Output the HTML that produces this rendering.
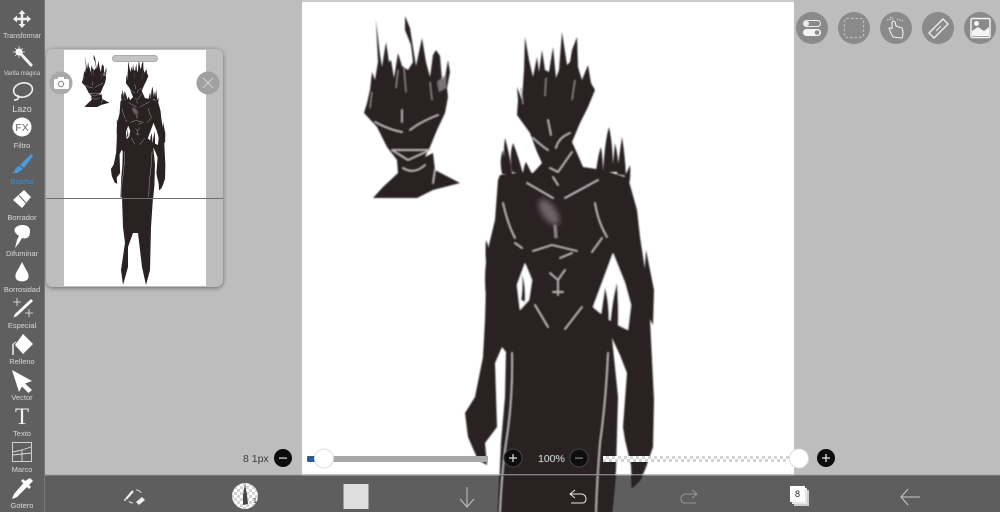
<!DOCTYPE html>
<html><head><meta charset="utf-8"><style>
html,body{margin:0;padding:0;background:#bdbdbd;width:1000px;height:512px;overflow:hidden}
svg{display:block}
text{font-family:"Liberation Sans",sans-serif}
.l{fill:#d8d8d8;font-size:7px;text-anchor:middle}
</style></head><body>
<svg width="1000" height="512" viewBox="0 0 1000 512" xmlns="http://www.w3.org/2000/svg">
<defs>
<filter id="b" x="-5%" y="-5%" width="110%" height="110%"><feGaussianBlur stdDeviation="0.9"/></filter>
<filter id="bb" x="-30%" y="-30%" width="160%" height="160%"><feGaussianBlur stdDeviation="3"/></filter>
<filter id="t" x="-5%" y="-5%" width="110%" height="110%"><feGaussianBlur stdDeviation="0.3"/></filter>
<filter id="sh" x="-10%" y="-10%" width="120%" height="120%"><feDropShadow dx="0" dy="1" stdDeviation="2.5" flood-color="#000" flood-opacity=".45"/></filter>
<pattern id="ck" width="6" height="6" patternUnits="userSpaceOnUse"><rect width="6" height="6" fill="#fff"/><rect width="3" height="3" fill="#d4d4d4"/><rect x="3" y="3" width="3" height="3" fill="#d4d4d4"/></pattern>
<clipPath id="mc"><rect x="64" y="50" width="142" height="236"/></clipPath>
<clipPath id="bc"><rect x="302" y="476" width="492" height="36"/></clipPath>
<g id="fig">
<g filter="url(#b)">
<g fill="#2a2023">
<!-- bust head -->
<path d="M364,113L367,103 370,90 372,72 375,80 378,62 376,20 380,55 382,67 386,42 389,62 391,60 394,78 398,53 402,66 408,70 413,62 411,45 405,30 405,16 410,28 413,47 416,66 422,38 426,62 430,77 433,55 436,50 440,56 442,80 445,78 448,60 450,72 447,88 448,97 445,113 437,130 430,147 425,157 433,153 435,170 460,183 433,190 417,198 373,198 383,187 398,173 397,160 387,147 377,127Z"/>
<!-- main figure -->
<path d="M498,180L500,175 523,172 533,173 542,163 537,152 530,133 517,115 518,100 517,87 522,100 524,70 525,37 529,60 533,77 537,57 539,72 542,50 545,70 549,72 553,47 556,78 559,70 562,32 567,65 570,62 572,50 577,37 578,67 582,80 588,65 591,83 595,90 588,107 580,123 572,142 577,153 583,167 603,170 628,178 637,210 640,237 645,270 650,320 654,400 653,447 645,470 640,480 632,488 631,465 625,440 623,427 627,373 620,355 612,338 618,397 616,470 612,512 498,512 501,443 505,397 506,352 502,347 495,363 497,427 485,443 487,465 478,460 468,437 465,413 475,397 483,357 485,320 486,285 489,245 495,220Z"/>
<path d="M502,174Q499,160 503,150 505,165 507,174ZM505,174Q503,150 505,138 510,155 512,174ZM512,172Q509,155 513,143 518,155 523,174ZM523,174Q524,165 526,162 529,168 533,176Z"/>
<path d="M596,172Q598,155 601,147 603,160 603,172ZM603,172Q605,140 609,127 613,145 613,172ZM612,172Q614,155 615,143 618,155 619,172ZM617,174Q620,150 622,137 625,155 626,176ZM624,178Q628,170 630,165 631,175 629,185Z"/>
<path d="M486,262Q485,250 486,240 491,252 491,262L493,300 486,296Q484,280 486,262ZM646,250L650,270 654,290 653,325 646,312 644,280Z"/>
</g>
<path fill="#fff" d="M525,263L532,280 529,300 520,310 517,285ZM613,253L625,283 631,305 628,330 618,325 606,318 593,307 603,280Z"/>
<path fill="#2a2023" d="M600,322Q603,300 605,288 609,300 609,322ZM610,326Q612,300 617,283 619,305 618,330Z"/>
<path fill="#2a2023" d="M521,300Q523,285 522,275 526,285 525,302Z"/>
<ellipse cx="549" cy="212" rx="7" ry="15" fill="#a59ea0" opacity=".55" filter="url(#bb)" transform="rotate(-35 549 212)"/>
<path d="M555,225L556,238" stroke="#8a8284" stroke-width="3" fill="none"/>
<g fill="none" stroke="#c4bdbf" stroke-width="1.4" stroke-linecap="round" stroke-linejoin="round">
<path d="M527,183L553,198M598,180L565,198M503,203Q508,225 515,238M595,203Q598,222 607,237M515,243L522,248M533,251L552,245 577,251M602,238L592,252M560,258L572,253"/>
<path d="M533,138Q543,147 548,150M570,133Q558,138 556,148M548,120L551,135M550,168L558,172 572,152M553,177L558,185"/>
<path d="M550,273L558,280 558,295M565,270L558,280M553,292L563,292M535,305L548,327M582,307L565,329"/>
<path d="M512,353Q513,400 506,443 502,470 500,512M608,353Q606,400 600,443 597,480 596,512"/>
<path d="M375,122Q390,130 402,132M438,115Q420,122 410,130M392,150L430,150 408,160ZM402,110L402,122M403,168Q414,175 425,165M435,170L433,183"/>
</g>
<g fill="none" stroke="#9a9294" stroke-width="1">
<path d="M372,92L370,108M398,70L396,88M404,68L406,92M430,82L432,100M521,88L523,104M575,80L572,100M546,78L545,96"/>
</g>
<path d="M437,82L446,74 446,88 439,92Z" fill="#8e8688" opacity=".8"/>
</g>
</g>
</defs>

<rect width="1000" height="512" fill="#bdbdbd"/>
<!-- canvas -->
<rect x="302" y="2" width="492" height="474" fill="#fff"/>
<rect x="302" y="0" width="492" height="2" fill="#c9c9c9"/>
<use href="#fig"/>

<!-- minimap -->
<g filter="url(#sh)"><rect x="46" y="49" width="177" height="238" rx="7" fill="#bdbdbd"/></g>
<rect x="64" y="50" width="142" height="236" fill="#fff"/>
<g clip-path="url(#mc)">
<g transform="translate(-23,50) scale(.288)"><use href="#fig"/></g>
<path fill="#2a2023" filter="url(#t)" d="M122,197L123,227 125,243 121,270 123,285 128,267 128,247 133,233 138,233 142,267 146,285 150,270 151,227 153,197Z"/>
</g>
<rect x="46" y="198" width="177" height="1" fill="#6e6e6e"/>
<rect x="112.500" y="55.500" width="45" height="6" rx="3" fill="#c4c4c4" stroke="#aaa"/>
<circle cx="61" cy="83" r="11.500" fill="#a9a9a9"/>
<rect x="54" y="79" width="15" height="10" rx="1.500" fill="#fff"/><rect x="58" y="77" width="6" height="3" fill="#fff"/><circle cx="61" cy="84" r="2.600" fill="none" stroke="#999" stroke-width="1.300"/>
<circle cx="208" cy="83" r="11.500" fill="#a0a0a0"/>
<path d="M203,78L213,88M213,78L203,88" stroke="#d0d0d0" stroke-width="1" fill="none"/>

<!-- right circles -->
<g fill="#8a8a8a"><circle cx="812" cy="28" r="16"/><circle cx="854" cy="28" r="16"/><circle cx="896" cy="28" r="16"/><circle cx="938" cy="28" r="16"/><circle cx="980" cy="28" r="16"/></g>
<g filter="url(#t)">
<rect x="803.500" y="20.500" width="17" height="6" rx="3" fill="none" stroke="#eee"/><circle cx="806.500" cy="23.500" r="2.500" fill="#eee"/>
<rect x="803" y="29" width="18" height="7" rx="3.500" fill="#f4f4f4"/><circle cx="817" cy="32.500" r="2.300" fill="#888"/>
<rect x="844.500" y="18.500" width="19" height="19" rx="2" fill="none" stroke="#bdbdbd" stroke-width="1.200" stroke-dasharray="2.500 2"/>
<path d="M893,37Q890,32 889,28L892,28.500 892,22Q894,20 895,22L896,26 902,28Q904,33 902,38Z" fill="none" stroke="#eee" stroke-width="1.100"/>
<path d="M887,20L893,19M890,17L893,18M897,19L903,21" stroke="#ddd" stroke-width="1" stroke-dasharray="1.500 1" fill="none"/>
<path d="M929,33L943,19 948,24 934,38Z" fill="none" stroke="#eee" stroke-width="1.400"/><path d="M936,31L941,26" stroke="#eee" stroke-width="1"/>
<rect x="971" y="18.500" width="19" height="19" rx="1.500" fill="none" stroke="#f2f2f2" stroke-width="1.500"/>
<path d="M972,36V31L978,27 984,31 989,27V36Z" fill="#f4f4f4"/><circle cx="976.500" cy="23.500" r="2.500" fill="#f4f4f4"/>
</g>

<!-- sliders -->
<text x="243" y="462" font-size="10.500" fill="#3c3c3c">8 1px</text>
<circle cx="283" cy="458" r="9" fill="#0d0d0d"/><rect x="279" y="457.500" width="8" height="1.200" fill="#ddd"/>
<rect x="307" y="456" width="181" height="6" fill="#a8a8a8"/>
<rect x="307" y="456" width="10" height="6" rx="2" fill="#2d5a93"/>
<circle cx="324" cy="458.500" r="9.500" fill="#fff" stroke="#ddd"/>
<circle cx="513" cy="458" r="9" fill="#0d0d0d" stroke="#444"/><path d="M509,458H517M513,454V462" stroke="#ddd" stroke-width="1.200"/>
<text x="538" y="462" font-size="10.500" fill="#d8d8d8" stroke="#999" stroke-width=".3">100%</text>
<circle cx="579" cy="458" r="9" fill="#0d0d0d" stroke="#444"/><rect x="575" y="457.500" width="8" height="1.200" fill="#888"/>
<rect x="603" y="456" width="194" height="6" fill="url(#ck)"/>
<circle cx="799" cy="458.500" r="9.500" fill="#fff" stroke="#ddd"/>
<circle cx="826" cy="458" r="9" fill="#0d0d0d"/><path d="M822,458H830M826,454V462" stroke="#eee" stroke-width="1.200"/>

<!-- bottom bar -->
<rect x="45" y="475" width="955" height="37" fill="#000" opacity=".5"/>
<g clip-path="url(#bc)"><use href="#fig"/></g>
<rect x="45" y="474" width="955" height="1.500" fill="#a8a8a8" opacity=".7"/>
<g filter="url(#t)">
<path d="M126,499L133,491" stroke="#eee" stroke-width="2.200" fill="none"/><circle cx="125" cy="500" r="1" fill="#eee"/>
<path d="M136,502L142,497 145,500 139,505Z" fill="#eee"/>
<path d="M136,490Q140,490 141,493M129,501Q130,503 133,503" fill="none" stroke="#ddd" stroke-width="1"/>
<circle cx="245" cy="496" r="13" fill="url(#ck)"/>
<path d="M245,484L247,495 248,504 243,505 243,495Z" fill="#444"/><text x="253" y="503" font-size="7" fill="#222">1</text>
<rect x="343.500" y="484" width="25" height="25" fill="#dedede"/>
<path d="M467,487V507M460,499L467,507 474,499" fill="none" stroke="#c4c4c4" stroke-width="1"/>
<path d="M575,490L570,494 575,498M570,494H582Q586,495 586,499 586,503 582,503H571" fill="none" stroke="#e6e6e6" stroke-width="1"/>
<path d="M692,490L697,494 692,498M697,494H685Q681,495 681,499 681,503 685,503H696" fill="none" stroke="#969696" stroke-width="1"/>
<rect x="794" y="490" width="15" height="16" fill="#cfcfcf"/><rect x="792" y="488" width="15" height="16" fill="#e8e8e8"/>
<rect x="790" y="486" width="15" height="16" fill="#fff"/>
<text x="797.500" y="497" font-size="9" fill="#222" text-anchor="middle">8</text>
<path d="M920,497H901M908,489L901,497 908,505" fill="none" stroke="#c8c8c8" stroke-width="1"/>
</g>

<!-- left toolbar -->
<rect x="0" y="0" width="44" height="512" fill="#5f5f5f"/>
<rect x="44" y="0" width="1" height="512" fill="#777"/>
<g filter="url(#t)">
<path d="M22,10L25.500,14H23.200V17.800H27V15.500L31,19 27,22.500V20.200H23.200V24H25.500L22,28 18.500,24H20.800V20.200H17V22.500L13,19 17,15.500V17.800H20.800V14H18.500Z" fill="#f0f0f0"/>
<text class="l" x="22" y="38">Transformar</text>
<path d="M20,53L31,65" stroke="#f4f4f4" stroke-width="3" stroke-linecap="round"/>
<circle cx="19" cy="52" r="3.500" fill="#fff"/><path d="M19,46V58M13,52H25M15,48L23,56M23,48L15,56" stroke="#eee" stroke-width=".7"/>
<text class="l" x="22" y="75" style="font-size:6px">Varita mágica</text>
<ellipse cx="23" cy="90" rx="9.500" ry="7" fill="none" stroke="#f2f2f2" stroke-width="1.600" transform="rotate(-12 23 90)"/>
<path d="M18,95Q20,100 14,100" fill="none" stroke="#f2f2f2" stroke-width="1.600"/>
<text class="l" x="22" y="112" style="font-size:9px">Lazo</text>
<circle cx="22" cy="127" r="9.500" fill="#fff"/>
<text x="22" y="131" font-size="10.500" text-anchor="middle" fill="#666">FX</text>
<text class="l" x="22" y="148" style="font-size:7.500px">Filtro</text>
<path d="M31,154L33,156 24,168 20,165Z" fill="#4a9be0"/><path d="M19,166L23,169 17,173 12,173Q15,172 15,169Z" fill="#4a9be0"/>
<text class="l" x="22" y="184" style="fill:#3f8fd8">Brocha</text>
<path d="M24,190L31,197 22,208 13,200Z" fill="#fff"/><path d="M19,195.500L26,203" stroke="#5f5f5f" stroke-width="1"/>
<text class="l" x="22" y="220" style="font-size:7.500px">Borrador</text>
<path d="M22,225Q31,225 30,233 29,240 22,238L19,243 15,248 17,240 19,236Q13,232 15,228 18,225 22,225Z" fill="#fff"/>
<text class="l" x="22" y="256" style="font-size:7.500px">Difuminar</text>
<path d="M22,262Q25,268 27.500,272 30,277 27,280 22,283 17,280 14,277 16.500,272 19,268 22,262Z" fill="#fff"/>
<text class="l" x="22" y="292" style="font-size:7.500px">Borrosidad</text>
<path d="M31,299L33,301 17,316 13.500,317.500 15,314Z" fill="#fff"/>
<path d="M17,298V306M13,302H21M29,309V317M25,313H33" stroke="#eee" stroke-width=".8"/>
<text class="l" x="22" y="328" style="font-size:7.500px">Especial</text>
<path d="M23,334L33,344 23,354 15,345Z" fill="#fff"/><path d="M13,344V355" stroke="#eee" stroke-width="1.500"/><path d="M13,344L16,342" stroke="#eee" stroke-width="1"/>
<text class="l" x="22" y="364" style="font-size:7.500px">Relleno</text>
<path d="M12,370L32,381 25,383.500 32,390 28.500,393 22,386.500 19,392Z" fill="#fff"/>
<text class="l" x="22" y="400" style="font-size:7.500px">Vector</text>
<text x="22" y="424" font-size="23" fill="#f2f2f2" text-anchor="middle" style="font-family:'Liberation Serif',serif">T</text>
<text class="l" x="22" y="436" style="font-size:7.500px">Texto</text>
<rect x="12.500" y="442.500" width="19" height="19" fill="none" stroke="#ddd" stroke-width=".9"/>
<path d="M13,452L22,450 31,447M13,455L31,453M22,450V461" fill="none" stroke="#ddd" stroke-width=".9"/>
<text class="l" x="22" y="472" style="font-size:7.500px">Marco</text>
<path d="M30,478L33,481 29,485 31,487 29,489 21,481 23,479 25,481Z" fill="#fff"/><path d="M23.500,483L27,487 17,497 12,499 14,494Z" fill="#fff"/>
<text class="l" x="22" y="508" style="font-size:7.500px">Gotero</text>
</g>
</svg>
</body></html>
